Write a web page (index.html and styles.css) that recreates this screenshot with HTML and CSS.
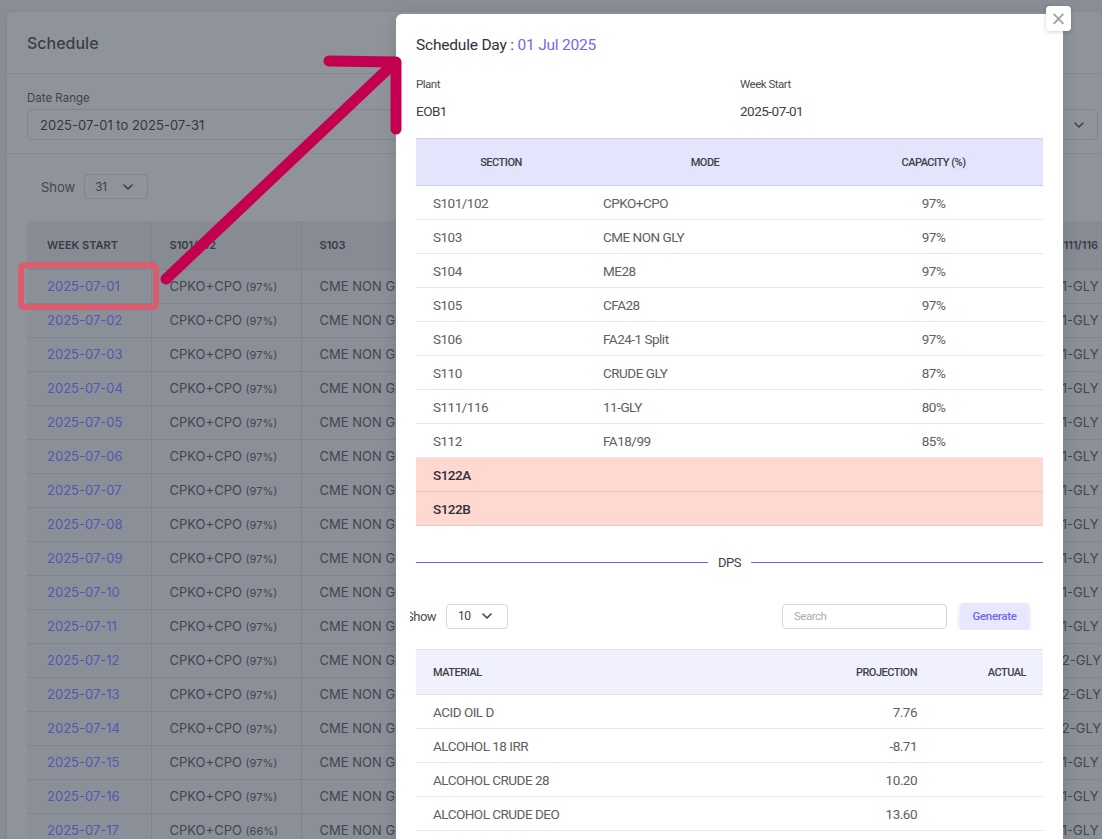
FILE: index.html
```html
<!DOCTYPE html>
<html lang="en">
<head>
<meta charset="utf-8">
<title>Schedule</title>
<link rel="stylesheet" href="styles.css">
</head>
<body>
<div class="page">
  <div class="card">
    <div class="card-head">Schedule</div>
    <div class="card-body">
      <div class="lbl">Date Range</div>
      <div class="range-input">
        <span>2025-07-01 to 2025-07-31</span>
        <svg class="chev" width="10" height="6" viewBox="0 0 10 6"><path d="M1 1l4 4 4-4" fill="none" stroke="currentColor" stroke-width="1.6" stroke-linecap="round" stroke-linejoin="round"/></svg>
      </div>
    </div>
    <div class="card-table">
      <div class="show-row">
        <span>Show</span>
        <div class="bg-select"><span>31</span>
          <svg width="10" height="6" viewBox="0 0 10 6"><path d="M1 1l4 4 4-4" fill="none" stroke="currentColor" stroke-width="1.6" stroke-linecap="round" stroke-linejoin="round"/></svg>
        </div>
      </div>
      <table class="bg-table">
        <colgroup>
          <col style="width:124px"><col style="width:150px"><col style="width:147px"><col style="width:147px"><col style="width:147px"><col style="width:148px"><col style="width:148px"><col style="width:150px">
        </colgroup>
        <thead>
          <tr><th>Week Start</th><th>S101/102</th><th>S103</th><th>S104</th><th>S105</th><th>S106</th><th>S110</th><th>S111/116</th></tr>
        </thead>
        <tbody id="bgrows"></tbody>
      </table>
    </div>
  </div>
</div>

<svg class="annot" width="1102" height="839" viewBox="0 0 1102 839">
  <rect x="21" y="265" width="135" height="42" rx="3" fill="none" stroke="#d95d6f" stroke-width="6"/>
  <path d="M166 279 L390 67" fill="none" stroke="#c3004f" stroke-width="11" stroke-linecap="round"/>
  <path d="M329 61 L396 62 L396 129" fill="none" stroke="#c3004f" stroke-width="11" stroke-linecap="round" stroke-linejoin="round"/>
</svg>

<div class="modal">
  <button class="close" type="button">&#215;</button>
  <div class="modal-title">Schedule Day : <span class="accent">01 Jul 2025</span></div>
  <div class="meta">
    <div class="meta-col"><div class="meta-lbl">Plant</div><div class="meta-val">EOB1</div></div>
    <div class="meta-col"><div class="meta-lbl">Week Start</div><div class="meta-val">2025-07-01</div></div>
  </div>
  <table class="sec-table">
    <colgroup><col style="width:170px"><col style="width:238px"><col></colgroup>
    <thead><tr><th>Section</th><th>Mode</th><th>Capacity (%)</th></tr></thead>
    <tbody>
      <tr><td>S101/102</td><td>CPKO+CPO</td><td class="c">97%</td></tr>
      <tr><td>S103</td><td>CME NON GLY</td><td class="c">97%</td></tr>
      <tr><td>S104</td><td>ME28</td><td class="c">97%</td></tr>
      <tr><td>S105</td><td>CFA28</td><td class="c">97%</td></tr>
      <tr><td>S106</td><td>FA24-1 Split</td><td class="c">97%</td></tr>
      <tr><td>S110</td><td>CRUDE GLY</td><td class="c">87%</td></tr>
      <tr><td>S111/116</td><td>11-GLY</td><td class="c">80%</td></tr>
      <tr><td>S112</td><td>FA18/99</td><td class="c">85%</td></tr>
      <tr class="off"><td>S122A</td><td></td><td></td></tr>
      <tr class="off"><td>S122B</td><td></td><td></td></tr>
    </tbody>
  </table>
  <div class="divider"><span>DPS</span></div>
  <div class="controls">
    <div class="ctl-left">
      <span class="show-lbl">Show</span>
      <div class="m-select"><span>10</span>
        <svg width="10" height="6" viewBox="0 0 10 6"><path d="M1 1l4 4 4-4" fill="none" stroke="currentColor" stroke-width="1.6" stroke-linecap="round" stroke-linejoin="round"/></svg>
      </div>
    </div>
    <div class="ctl-right">
      <div class="search">Search</div>
      <button class="gen" type="button">Generate</button>
    </div>
  </div>
  <table class="mat-table">
    <colgroup><col><col style="width:160px"><col style="width:109px"></colgroup>
    <thead><tr><th>Material</th><th class="r">Projection</th><th class="r">Actual</th></tr></thead>
    <tbody>
      <tr><td>ACID OIL D</td><td class="r">7.76</td><td></td></tr>
      <tr><td>ALCOHOL 18 IRR</td><td class="r">-8.71</td><td></td></tr>
      <tr><td>ALCOHOL CRUDE 28</td><td class="r">10.20</td><td></td></tr>
      <tr><td>ALCOHOL CRUDE DEO</td><td class="r">13.60</td><td></td></tr>
      <tr><td>ALCOHOL CRUDE IRR</td><td class="r">4.12</td><td></td></tr>
    </tbody>
  </table>
</div>

<script>
  var rows = document.getElementById('bgrows');
  var html = '';
  for (var d = 1; d <= 18; d++) {
    var day = (d < 10 ? '0' : '') + d;
    var p = d === 17 ? '66' : '97';
    var g = (d >= 12 && d <= 14) ? '12-GLY' : '11-GLY';
    html += '<tr><td class="date">2025-07-' + day + '</td>' +
      '<td>CPKO+CPO <small>(' + p + '%)</small></td>' +
      '<td>CME NON GLY <small>(97%)</small></td>' +
      '<td>ME28 <small>(97%)</small></td>' +
      '<td>CFA28 <small>(97%)</small></td>' +
      '<td>FA24-1 Split <small>(97%)</small></td>' +
      '<td>CRUDE GLY <small>(87%)</small></td>' +
      '<td>' + g + ' <small>(80%)</small></td></tr>';
  }
  rows.innerHTML = html;
</script>
</body>
</html>
```

FILE: styles.css
```css
* { box-sizing: border-box; }
html, body { margin: 0; padding: 0; }
body {
  width: 1102px;
  height: 839px;
  overflow: hidden;
  background: #898e96;
  font-family: "Inter", "Liberation Sans", sans-serif;
  color: #3e434b;
  position: relative;
}

.page { padding: 12px 0 0 7px; }

.card {
  width: 1095px;
  background: #8f949b;
  border-radius: 6px;
  box-shadow: 0 2px 6px rgba(0,0,0,0.08);
}
.card-head {
  height: 62px;
  display: flex;
  align-items: center;
  padding: 0 20px;
  font-size: 16px;
  font-weight: 500;
  color: #3a3f47;
  border-bottom: 1px solid #858a92;
}
.card-body {
  padding: 17px 20px 13px;
  border-bottom: 1px solid #858a92;
}
.lbl { font-size: 11.5px; color: #3e434b; line-height: 14px; margin-bottom: 4px; }
.range-input {
  height: 31px;
  width: 1071px;
  border: 1px solid #80858d;
  border-radius: 5px;
  display: flex;
  align-items: center;
  justify-content: space-between;
  padding: 0 13px 0 12px;
  font-size: 13px;
  color: #33383f;
}
.chev { color: #3e434b; }

.card-table { padding: 20px 0 0 20px; overflow: hidden; }
.show-row {
  display: flex;
  align-items: center;
  gap: 9px;
  padding-left: 14px;
  font-size: 13px;
  color: #42474f;
  height: 25px;
}
.bg-select {
  width: 64px;
  height: 25px;
  border: 1px solid #80858d;
  border-radius: 4px;
  display: flex;
  align-items: center;
  justify-content: space-between;
  padding: 0 14px 0 10px;
  font-size: 11.5px;
  color: #3a3f47;
}
.bg-table {
  margin-top: 22px;
  border-collapse: collapse;
  table-layout: fixed;
  width: 1159px;
}
.bg-table th {
  height: 48px;
  background: #878c94;
  text-align: left;
  font-size: 11px;
  font-weight: 600;
  text-transform: uppercase;
  color: #373c44;
  padding: 0 18px;
  border-right: 1px solid #80858d;
  border-bottom: 1px solid #7f848c;
  white-space: nowrap;
  overflow: hidden;
}
.bg-table th:first-child { padding-left: 20px; }
.bg-table td {
  height: 34px;
  padding: 0 18px;
  font-size: 13px;
  color: #42474f;
  border-right: 1px solid #80858d;
  border-bottom: 1px solid #80858d;
  white-space: nowrap;
  overflow: hidden;
  background: #8b9098;
}
.bg-table td:first-child { padding-left: 20px; }
.bg-table td small { font-size: 11px; }
.bg-table td.date { color: #5357b0; }

.annot {
  position: absolute;
  left: 0; top: 0;
  z-index: 5;
  pointer-events: none;
}

.modal {
  position: absolute;
  left: 396px;
  top: 14px;
  width: 667px;
  height: 860px;
  background: #ffffff;
  border-radius: 6px;
  padding: 22px 20px 0;
  font-family: "Roboto", "Liberation Sans", sans-serif;
  letter-spacing: -0.5px;
  color: #5d6066;
  z-index: 4;
  box-shadow: 0 4px 16px rgba(0,0,0,0.12);
}
.close {
  position: absolute;
  right: -8px;
  top: -8px;
  width: 25px;
  height: 25px;
  border: none;
  border-radius: 4px;
  background: #fff;
  color: #9a9ca1;
  font-size: 19px;
  line-height: 23px;
  padding: 0;
  font-family: "DejaVu Sans", sans-serif;
  letter-spacing: 0;
  box-shadow: 0 1px 4px rgba(0,0,0,0.18);
}
.modal-title {
  font-size: 15.5px;
  line-height: 18px;
  color: #2f3237;
  font-weight: 400;
  letter-spacing: -0.2px;
}
.accent { color: #7367f0; }
.meta { display: flex; margin-top: 22px; }
.meta-col { flex: 0 0 324px; }
.meta-lbl { font-size: 11.5px; line-height: 16px; color: #4a4d53; }
.meta-val { font-size: 13.5px; line-height: 18px; margin-top: 10px; color: #3e4148; }

.sec-table {
  margin-top: 18px;
  width: 627px;
  border-collapse: collapse;
  table-layout: fixed;
}
.sec-table th {
  height: 47px;
  background: #e4e4fc;
  border-top: 1px solid #cfcff4;
  border-bottom: 1px solid #cbcbee;
  font-size: 11px;
  font-weight: 500;
  text-transform: uppercase;
  color: #3e4148;
  text-align: center;
}
.sec-table td {
  height: 34px;
  padding: 0 17px;
  font-size: 13.5px;
  border-bottom: 1px solid #e6e6e8;
  color: #5d6066;
}
.sec-table td.c { text-align: center; }
.sec-table tr.off td {
  background: #ffd8d1;
  border-bottom-color: #ebc6c0;
  color: #2f3237;
  font-weight: 500;
}

.divider {
  margin-top: 29px;
  display: flex;
  align-items: center;
  gap: 10px;
  font-size: 13px;
  color: #3e4148;
}
.divider::before, .divider::after {
  content: "";
  flex: 1;
  height: 1px;
  background: #6c63f0;
}

.controls {
  margin: 32px 0 0 -6px;
  width: 633px;
  display: flex;
  align-items: center;
  justify-content: space-between;
  overflow: hidden;
  height: 28px;
}
.ctl-left { display: flex; align-items: center; gap: 10px; }
.show-lbl { margin-left: -4px; font-size: 13px; color: #4a4d53; }
.m-select {
  width: 62px;
  height: 25px;
  border: 1px solid #d5d6da;
  border-radius: 4px;
  display: flex;
  align-items: center;
  justify-content: space-between;
  padding: 0 15px 0 11px;
  font-size: 12px;
  color: #3e4148;
}
.ctl-right { display: flex; align-items: center; gap: 13px; padding-right: 14px; }
.search {
  width: 165px;
  height: 25px;
  border: 1px solid #d5d6da;
  border-radius: 4px;
  font-size: 11.5px;
  color: #a9abb0;
  display: flex;
  align-items: center;
  padding-left: 11px;
}
.gen {
  width: 69px;
  height: 27px;
  border: none;
  border-radius: 4px;
  background: #e8e8fd;
  color: #7367f0;
  font-family: inherit;
  letter-spacing: -0.3px;
  font-size: 11.5px;
  font-weight: 500;
  padding: 0;
  box-shadow: 0 2px 4px rgba(80,80,120,0.22);
}

.mat-table {
  margin-top: 19px;
  width: 627px;
  border-collapse: collapse;
  table-layout: fixed;
}
.mat-table th {
  height: 45px;
  background: #f1f1fd;
  border-top: 1px solid #e4e4e8;
  border-bottom: 1px solid #e4e4e8;
  font-size: 11px;
  font-weight: 500;
  text-transform: uppercase;
  color: #3e4148;
  text-align: left;
  padding: 0 17px;
}
.mat-table td {
  height: 34px;
  padding: 0 17px;
  font-size: 13.5px;
  border-bottom: 1px solid #e6e6e8;
  color: #5d6066;
}
.mat-table .r { text-align: right; }
```
